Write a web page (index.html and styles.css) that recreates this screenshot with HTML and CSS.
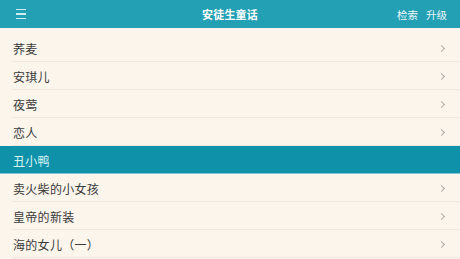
FILE: index.html
```html
<!DOCTYPE html>
<html lang="zh">
<head>
<meta charset="utf-8">
<link rel="stylesheet" href="styles.css">
</head>
<body>
<div class="app">
  <header class="bar">
    <div class="menu"><span></span><span></span><span></span></div>
    <div class="title">安徒生童话</div>
    <div class="actions"><span>检索</span><span>升级</span></div>
  </header>
  <ul class="list">
    <li class="row"><span>荞麦</span><i class="chev"></i></li>
    <li class="row"><span>安琪儿</span><i class="chev"></i></li>
    <li class="row"><span>夜莺</span><i class="chev"></i></li>
    <li class="row"><span>恋人</span><i class="chev"></i></li>
    <li class="row active"><span>丑小鸭</span></li>
    <li class="row"><span>卖火柴的小女孩</span><i class="chev"></i></li>
    <li class="row"><span>皇帝的新装</span><i class="chev"></i></li>
    <li class="row"><span>海的女儿（一）</span><i class="chev"></i></li>
  </ul>
</div>
</body>
</html>
```

FILE: styles.css
```css
* { box-sizing: border-box; margin: 0; padding: 0; }
html, body { width: 460px; height: 259px; overflow: hidden; background: #fcf5ec; }
body { font-family: "Noto Sans CJK SC", "Noto Sans", sans-serif; }
.app { display: flex; flex-direction: column; height: 259px; }
.bar {
  height: 28px; background: #23a0b3; color: #fff;
  display: flex; align-items: center; position: relative;
  padding: 0 13px 0 16px;
}
.menu { width: 10px; display: flex; flex-direction: column; gap: 3px; }
.menu span { display: block; height: 1.5px; background: #cdeef4; }
.title {
  position: absolute; left: 0; right: 0; text-align: center;
  font-size: 11px; font-weight: bold; letter-spacing: 0.2px; pointer-events: none;
}
.actions { margin-left: auto; display: flex; gap: 8px; font-size: 10.5px; color: #eaf7fa; }
.list { list-style: none; padding-top: 6px; }
.row {
  height: 28px; display: flex; align-items: center; justify-content: space-between;
  padding: 0 14px 0 13px; font-size: 12px; letter-spacing: 0.3px; color: #3a3a3a;
  position: relative;
}
.row::after {
  content: ""; position: absolute; left: 12px; right: 0; bottom: 0; height: 1px; background: #efe8dc;
}
.row.active { background: #0f91a9; color: #d9f2f6; }
.row.active::after { left: 0; background: #7dc6d2; }
.chev {
  width: 5px; height: 5px; border-top: 1px solid #b0ada9; border-right: 1px solid #b0ada9;
  transform: rotate(45deg); margin-right: 2px;
}
```
